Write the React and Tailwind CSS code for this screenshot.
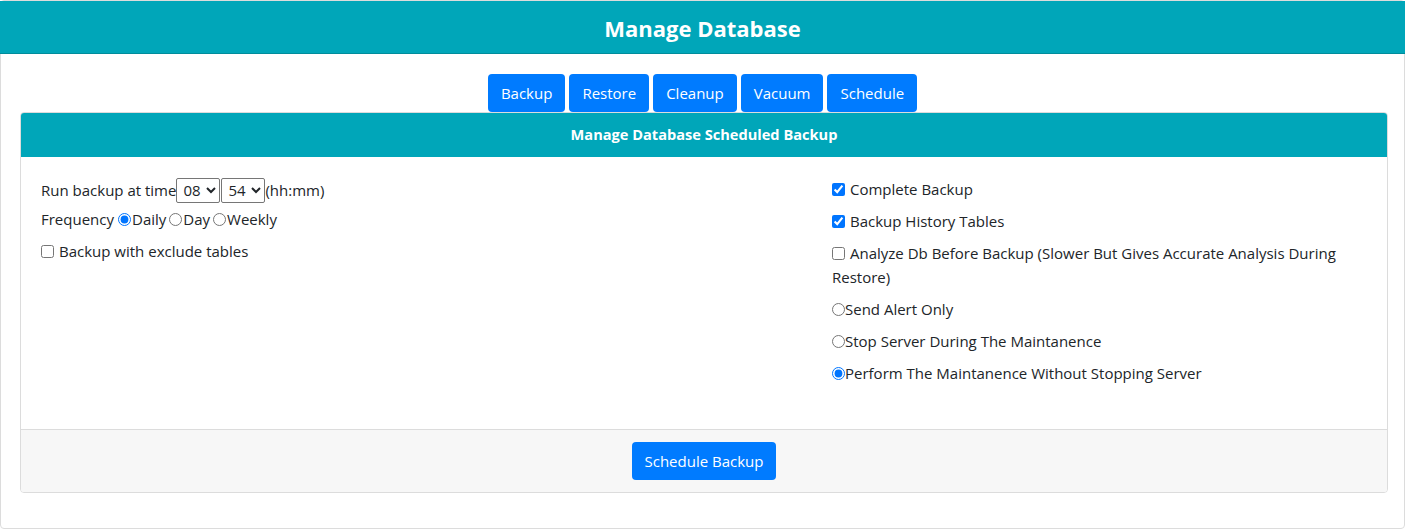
import { useState } from "react";

const tabs = ["Backup", "Restore", "Cleanup", "Vacuum", "Schedule"];

const hours = Array.from({ length: 24 }, (_, i) => String(i).padStart(2, "0"));
const minutes = Array.from({ length: 60 }, (_, i) => String(i).padStart(2, "0"));

const App = () => {
  const [hour, setHour] = useState("08");
  const [minute, setMinute] = useState("54");
  const [frequency, setFrequency] = useState("daily");
  const [excludeTables, setExcludeTables] = useState(false);
  const [complete, setComplete] = useState(true);
  const [history, setHistory] = useState(true);
  const [analyze, setAnalyze] = useState(false);
  const [mode, setMode] = useState("perform");

  return (
    <div className="h-[529px] border border-[#dcdcdc] rounded-[4px] bg-white text-[#212529] font-['Open_Sans',sans-serif] text-[15px]">
      <div className="h-[53px] bg-[#00a6b9] border-b border-[#008c9b] flex items-center justify-center -mx-px">
        <h1 className="text-white text-[22px] font-bold pt-[3px]">Manage Database</h1>
      </div>

      <div className="flex justify-center gap-[4px] mt-[20px]">
        {tabs.map((tab) => (
          <button
            key={tab}
            className="h-[38px] px-[13px] bg-[#007bff] text-white rounded-[4px] text-[15px] leading-[24px]"
          >
            {tab}
          </button>
        ))}
      </div>

      <div className="ml-[19px] w-[1368px] border border-[#dcdcdc] rounded-[4px] overflow-hidden">
        <div className="h-[44px] bg-[#00a6b9] flex items-center justify-center">
          <h2 className="text-white text-[14.6px] font-bold">Manage Database Scheduled Backup</h2>
        </div>

        <div className="h-[272px] px-[20px] pt-[20px] grid grid-cols-[776px_535px] gap-x-[15px] leading-[24px]">
          <div>
            <div className="flex items-center h-[26px]">
              <span>Run backup at time</span>
              <select
                value={hour}
                onChange={(e) => setHour(e.target.value)}
                className="h-[25px] border border-[#767676] rounded-[2px] px-[2px] text-[15px]"
              >
                {hours.map((h) => (
                  <option key={h} value={h}>{h}</option>
                ))}
              </select>
              <select
                value={minute}
                onChange={(e) => setMinute(e.target.value)}
                className="h-[25px] border border-[#767676] rounded-[2px] px-[2px] ml-px text-[15px]"
              >
                {minutes.map((m) => (
                  <option key={m} value={m}>{m}</option>
                ))}
              </select>
              <span>(hh:mm)</span>
            </div>
            <div className="flex items-center mt-[4px]">
              <span className="mr-[1px]">Frequency</span>
              {[
                ["daily", "Daily"],
                ["day", "Day"],
                ["weekly", "Weekly"],
              ].map(([value, label]) => (
                <label key={value} className="flex items-center">
                  <input
                    type="radio"
                    name="frequency"
                    checked={frequency === value}
                    onChange={() => setFrequency(value)}
                    className="m-0 ml-[3px] mr-px w-[13px] h-[13px]"
                  />
                  {label}
                </label>
              ))}
            </div>
            <label className="flex items-center mt-[8px]">
              <input
                type="checkbox"
                checked={excludeTables}
                onChange={(e) => setExcludeTables(e.target.checked)}
                className="m-0 mr-[5px] w-[13px] h-[13px]"
              />
              Backup with exclude tables
            </label>
          </div>

          <div className="space-y-[8px]">
            <label className="flex items-center">
              <input
                type="checkbox"
                checked={complete}
                onChange={(e) => setComplete(e.target.checked)}
                className="m-0 mr-[5px] w-[13px] h-[13px]"
              />
              Complete Backup
            </label>
            <label className="flex items-center">
              <input
                type="checkbox"
                checked={history}
                onChange={(e) => setHistory(e.target.checked)}
                className="m-0 mr-[5px] w-[13px] h-[13px]"
              />
              Backup History Tables
            </label>
            <label className="block">
              <input
                type="checkbox"
                checked={analyze}
                onChange={(e) => setAnalyze(e.target.checked)}
                className="m-0 mr-[5px] w-[13px] h-[13px] align-[-1px]"
              />
              Analyze Db Before Backup (Slower But Gives Accurate Analysis During Restore)
            </label>
            {[
              ["alert", "Send Alert Only"],
              ["stop", "Stop Server During The Maintanence"],
              ["perform", "Perform The Maintanence Without Stopping Server"],
            ].map(([value, label]) => (
              <label key={value} className="flex items-center">
                <input
                  type="radio"
                  name="mode"
                  checked={mode === value}
                  onChange={() => setMode(value)}
                  className="m-0 w-[13px] h-[13px]"
                />
                {label}
              </label>
            ))}
          </div>
        </div>

        <div className="h-[63px] bg-[#f7f7f7] border-t border-[#dcdcdc] flex items-center justify-center">
          <button className="h-[38px] px-[13px] bg-[#007bff] text-white rounded-[4px] text-[15px] leading-[24px]">
            Schedule Backup
          </button>
        </div>
      </div>
    </div>
  );
};

export default App;
